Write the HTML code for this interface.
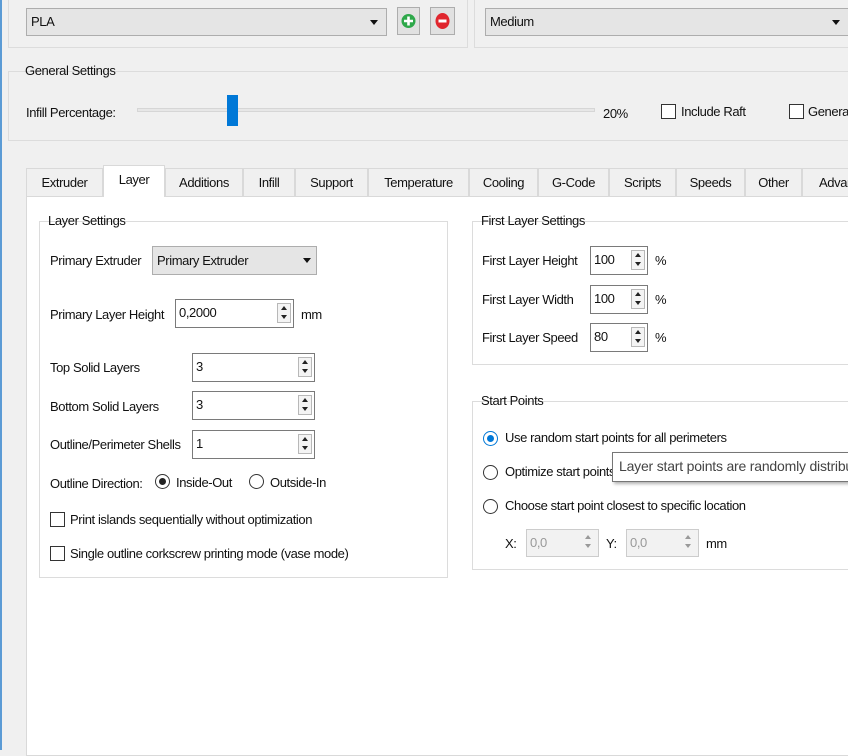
<!DOCTYPE html>
<html><head><meta charset="utf-8"><style>
*{box-sizing:border-box;margin:0;padding:0}
body{width:848px;height:750px;overflow:hidden;background:#f0f0f0;font-family:"Liberation Sans",sans-serif;font-size:13px;letter-spacing:-0.4px;color:#111;position:relative}
.a{position:absolute;white-space:nowrap}
.t{position:absolute;white-space:nowrap;line-height:16px}
.grp{position:absolute;border:1px solid #dcdcdc}
.gt{position:absolute;top:-9px;left:6px;padding:0 2px;line-height:16px}
.combo{position:absolute;background:#e5e5e5;border:1px solid #adadad;padding-left:4px;line-height:26px}
.arr{position:absolute;right:8px;top:11px;width:0;height:0;border-left:4px solid transparent;border-right:4px solid transparent;border-top:5px solid #111}
.spin{position:absolute;background:#fff;border:1px solid #7a7a7a;padding-left:3px;line-height:26px}
.spin.d{border-color:#ccc;background:#f2f2f2;color:#999}
.sb{position:absolute;right:2px;top:3px;width:14px;height:20px;border:1px solid #b8b8b8;background:#f4f4f4}
.sb:before{content:"";position:absolute;left:3px;top:2px;border-left:3px solid transparent;border-right:3px solid transparent;border-bottom:4px solid #222}
.sb:after{content:"";position:absolute;left:3px;top:11px;border-left:3px solid transparent;border-right:3px solid transparent;border-top:4px solid #222}
.d .sb:before{border-bottom-color:#999}.d .sb:after{border-top-color:#999}
.cb{position:absolute;width:15px;height:15px;border:1px solid #333;background:#fff}
.rb{position:absolute;width:15px;height:15px;border:1px solid #333;border-radius:50%;background:#fff}
.rb.on{border-color:#0078d7}
.rb.on:after{content:"";position:absolute;left:3px;top:3px;width:7px;height:7px;border-radius:50%;background:#0078d7}
.rb.onk:after{content:"";position:absolute;left:3px;top:3px;width:7px;height:7px;border-radius:50%;background:#222}
.tab{position:absolute;top:168px;height:28px;border:1px solid #d9d9d9;border-bottom:none;background:#f0f0f0;line-height:28px;text-align:center}
</style></head><body>
<div class="a" style="left:0;top:0;width:2px;height:750px;background:#5b9bd5"></div>

<div class="grp" style="left:8px;top:-10px;width:460px;height:58px"></div>
<div class="grp" style="left:474px;top:-10px;width:380px;height:58px"></div>
<div class="combo" style="left:26px;top:8px;width:361px;height:28px">PLA<div class="arr"></div></div>
<div class="a" style="left:397px;top:7px;width:23px;height:28px;background:#e1e1e1;border:1px solid #adadad">
<svg width="21" height="26" viewBox="0 0 21 26"><circle cx="10.5" cy="13" r="7" fill="#2ea84a"/><path d="M10.5 8.5v9M6 13h9" stroke="#fff" stroke-width="2.6"/></svg></div>
<div class="a" style="left:430px;top:7px;width:25px;height:28px;background:#e1e1e1;border:1px solid #adadad">
<svg width="23" height="26" viewBox="0 0 23 26"><ellipse cx="11.5" cy="13" rx="7" ry="8" fill="#e0262e"/><path d="M7.5 13h8" stroke="#fff" stroke-width="3"/></svg></div>
<div class="combo" style="left:485px;top:8px;width:370px;height:28px">Medium<div class="arr" style="right:14px"></div></div>

<div class="grp" style="left:8px;top:71px;width:850px;height:70px"><div class="gt" style="left:14px;padding:0 4px 0 2px">General Settings</div></div>
<div class="t" style="left:26px;top:105px">Infill Percentage:</div>
<div class="a" style="left:137px;top:108px;width:458px;height:4px;background:#e7e7e7;border:1px solid #d6d6d6"></div>
<div class="a" style="left:227px;top:95px;width:11px;height:31px;background:#0078d7"></div>
<div class="t" style="left:603px;top:106px">20%</div>
<div class="cb" style="left:661px;top:104px"></div><div class="t" style="left:681px;top:104px">Include Raft</div>
<div class="cb" style="left:789px;top:104px"></div><div class="t" style="left:808px;top:104px">Generate</div>

<div class="a" style="left:26px;top:196px;width:830px;height:560px;background:#fff;border:1px solid #d9d9d9"></div>
<div class="tab" style="left:26px;width:77px">Extruder</div>
<div class="tab" style="left:103px;top:165px;height:32px;width:62px;background:#fff">Layer</div>
<div class="tab" style="left:165px;width:78px">Additions</div>
<div class="tab" style="left:243px;width:52px">Infill</div>
<div class="tab" style="left:295px;width:73px">Support</div>
<div class="tab" style="left:368px;width:101px">Temperature</div>
<div class="tab" style="left:469px;width:69px">Cooling</div>
<div class="tab" style="left:538px;width:71px">G-Code</div>
<div class="tab" style="left:609px;width:67px">Scripts</div>
<div class="tab" style="left:676px;width:69px">Speeds</div>
<div class="tab" style="left:745px;width:57px">Other</div>
<div class="tab" style="left:802px;width:70px;text-align:left;padding-left:16px">Advanced</div>

<div class="grp" style="left:39px;top:221px;width:409px;height:357px"><div class="gt">Layer Settings</div></div>
<div class="t" style="left:50px;top:253px">Primary Extruder</div>
<div class="combo" style="left:152px;top:246px;width:165px;height:29px;line-height:27px">Primary Extruder<div class="arr" style="right:5px"></div></div>
<div class="t" style="left:50px;top:307px">Primary Layer Height</div>
<div class="spin" style="left:175px;top:299px;width:119px;height:29px">0,2000<div class="sb"></div></div>
<div class="t" style="left:301px;top:307px">mm</div>
<div class="t" style="left:50px;top:360px">Top Solid Layers</div>
<div class="spin" style="left:192px;top:353px;width:123px;height:29px">3<div class="sb"></div></div>
<div class="t" style="left:50px;top:399px">Bottom Solid Layers</div>
<div class="spin" style="left:192px;top:391px;width:123px;height:29px">3<div class="sb"></div></div>
<div class="t" style="left:50px;top:437px">Outline/Perimeter Shells</div>
<div class="spin" style="left:192px;top:430px;width:123px;height:29px">1<div class="sb"></div></div>
<div class="t" style="left:50px;top:476px">Outline Direction:</div>
<div class="rb onk" style="left:155px;top:474px"></div><div class="t" style="left:176px;top:475px">Inside-Out</div>
<div class="rb" style="left:249px;top:474px"></div><div class="t" style="left:270px;top:475px">Outside-In</div>
<div class="cb" style="left:50px;top:512px"></div><div class="t" style="left:70px;top:512px">Print islands sequentially without optimization</div>
<div class="cb" style="left:50px;top:546px"></div><div class="t" style="left:70px;top:546px">Single outline corkscrew printing mode (vase mode)</div>

<div class="grp" style="left:472px;top:221px;width:390px;height:144px"><div class="gt">First Layer Settings</div></div>
<div class="t" style="left:482px;top:253px">First Layer Height</div>
<div class="spin" style="left:590px;top:246px;width:58px;height:29px">100<div class="sb"></div></div>
<div class="t" style="left:655px;top:253px">%</div>
<div class="t" style="left:482px;top:292px">First Layer Width</div>
<div class="spin" style="left:590px;top:285px;width:58px;height:29px">100<div class="sb"></div></div>
<div class="t" style="left:655px;top:292px">%</div>
<div class="t" style="left:482px;top:330px">First Layer Speed</div>
<div class="spin" style="left:590px;top:323px;width:58px;height:29px">80<div class="sb"></div></div>
<div class="t" style="left:655px;top:330px">%</div>

<div class="grp" style="left:472px;top:401px;width:390px;height:169px"><div class="gt">Start Points</div></div>
<div class="rb on" style="left:483px;top:431px"></div><div class="t" style="left:505px;top:430px">Use random start points for all perimeters</div>
<div class="rb" style="left:483px;top:465px"></div><div class="t" style="left:505px;top:464px">Optimize start points for fastest printing</div>
<div class="rb" style="left:483px;top:499px"></div><div class="t" style="left:505px;top:498px">Choose start point closest to specific location</div>
<div class="t" style="left:505px;top:536px">X:</div>
<div class="spin d" style="left:526px;top:529px;width:73px;height:28px">0,0<div class="sb" style="border:none;background:none"></div></div>
<div class="t" style="left:606px;top:536px">Y:</div>
<div class="spin d" style="left:626px;top:529px;width:73px;height:28px">0,0<div class="sb" style="border:none;background:none"></div></div>
<div class="t" style="left:706px;top:536px">mm</div>

<div class="a" style="left:612px;top:452px;width:250px;height:30px;background:#fff;border:1px solid #767676;box-shadow:2px 2px 3px rgba(0,0,0,.3);padding-left:6px;line-height:27px;font-size:14px;letter-spacing:-0.2px;color:#444">Layer start points are randomly distributed</div>
</body></html>
